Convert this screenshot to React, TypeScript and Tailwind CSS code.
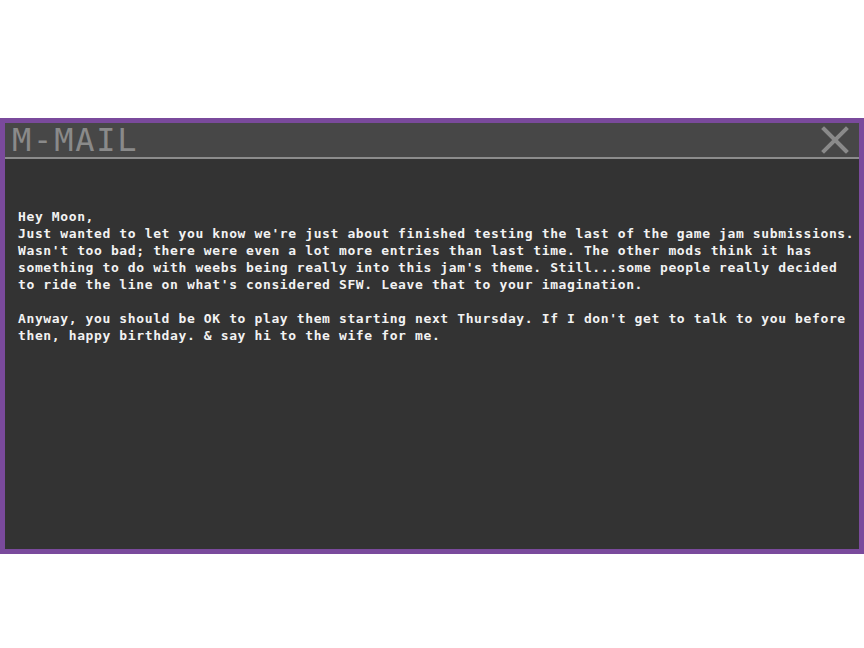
import React from 'react';

const lines = [
  'Hey Moon,',
  "Just wanted to let you know we're just about finished testing the last of the game jam submissions.",
  "Wasn't too bad; there were even a lot more entries than last time. The other mods think it has",
  "something to do with weebs being really into this jam's theme. Still...some people really decided",
  "to ride the line on what's considered SFW. Leave that to your imagination.",
  '',
  "Anyway, you should be OK to play them starting next Thursday. If I don't get to talk to you before",
  'then, happy birthday. & say hi to the wife for me.',
];

export default function App() {
  return (
    <div className="min-h-[648px] w-[864px] bg-white pt-[118px]">
      <div className="flex h-[436px] flex-col border-[5px] border-[#7a4a9c] bg-[#333333]">
        {/* title bar */}
        <div className="flex h-[36px] items-center justify-between border-b-2 border-[#8c8c8c] bg-[#474747] pl-[7px] pr-[10px]">
          <span
            className="text-[32px] leading-none tracking-[1.8px] text-[#8a8a8a]"
            style={{ fontFamily: '"DejaVu Sans Mono", monospace' }}
          >
            M-MAIL
          </span>
          <svg width="28" height="28" viewBox="0 0 28 28" className="text-[#8a8a8a]">
            <path d="M3 3L25 25M25 3L3 25" stroke="currentColor" strokeWidth="4" strokeLinecap="square" />
          </svg>
        </div>

        {/* message */}
        <div
          className="flex-1 pl-[13px] pt-[49px] text-[13px] font-bold leading-[17px] tracking-[0.62px] text-[#f2f2f2]"
          style={{ fontFamily: '"DejaVu Sans Mono", monospace' }}
        >
          {lines.map((l, i) => (
            <div key={i} className="h-[17px] whitespace-pre">
              {l}
            </div>
          ))}
        </div>
      </div>
    </div>
  );
}
